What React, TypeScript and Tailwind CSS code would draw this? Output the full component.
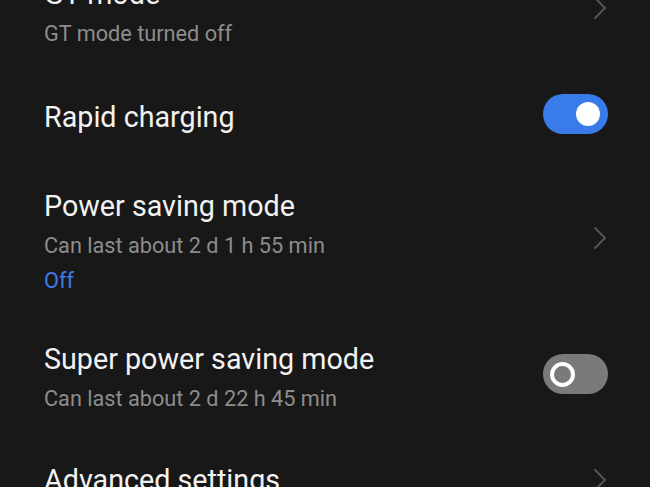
import type { FC } from 'react';

const Chevron: FC<{ className?: string }> = ({ className = '' }) => (
  <svg width="14" height="24" viewBox="0 0 14 24" className={className}>
    <path d="M2 2 L12 12 L2 22" fill="none" stroke="#545454" strokeWidth="2" strokeLinecap="round" strokeLinejoin="round" />
  </svg>
);

const Toggle: FC<{ on: boolean; className?: string }> = ({ on, className = '' }) =>
  on ? (
    <div className={`w-[65px] h-[40px] rounded-full bg-[#3a7bea] flex items-center justify-end pr-[8px] ${className}`}>
      <div className="w-[24px] h-[24px] rounded-full bg-white" />
    </div>
  ) : (
    <div className={`w-[65px] h-[40px] rounded-full bg-[#7a7a7a] flex items-center pl-[7px] ${className}`}>
      <div className="w-[25px] h-[25px] rounded-full border-[4px] border-white bg-[#7a7a7a]" />
    </div>
  );

const Title: FC<{ text: string }> = ({ text }) => (
  <div className="text-[28.7px] leading-[36px] text-[#f2f2f2]">{text}</div>
);

const Sub: FC<{ text: string; blue?: boolean; first?: boolean }> = ({ text, blue, first }) => (
  <div className={`text-[21.7px] leading-[35px] ${first ? 'mt-[4px]' : ''} ${blue ? 'text-[#3d7be6]' : 'text-[#8d8d8d]'}`}>
    {text}
  </div>
);

export default function App() {
  return (
    <div
      className="w-[650px] h-[487px] overflow-hidden bg-[#181818]"
      style={{ fontFamily: 'Roboto, "Noto Sans", sans-serif' }}
    >
      <div className="mt-[-24px] flex flex-col">
        {/* GT mode */}
        <div className="flex items-center pl-[44px] pr-[43px] pb-[21px]">
          <div className="flex-1">
            <Title text="GT mode" />
            <Sub text="GT mode turned off" first />
          </div>
          <Chevron className="mb-[12px]" />
        </div>

        {/* Rapid charging */}
        <div className="flex items-center pl-[44px] pr-[42px] pt-[22px] pb-[30px]">
          <div className="flex-1">
            <Title text="Rapid charging" />
          </div>
          <Toggle on className="mb-[5px]" />
        </div>

        {/* Power saving mode */}
        <div className="flex items-center pl-[44px] pr-[43px] pt-[19px] pb-[21px]">
          <div className="flex-1">
            <Title text="Power saving mode" />
            <Sub text="Can last about 2 d 1 h 55 min" first />
            <Sub text="Off" blue />
          </div>
          <Chevron className="mb-[10px]" />
        </div>

        {/* Super power saving mode */}
        <div className="flex items-center pl-[44px] pr-[42px] pt-[22px] pb-[21px]">
          <div className="flex-1">
            <Title text="Super power saving mode" />
            <Sub text="Can last about 2 d 22 h 45 min" first />
          </div>
          <Toggle on={false} className="mb-[9px]" />
        </div>

        {/* Advanced settings */}
        <div className="flex items-center pl-[44px] pr-[43px] pt-[25px] pb-[21px]">
          <div className="flex-1">
            <Title text="Advanced settings" />
          </div>
          <Chevron />
        </div>
      </div>
    </div>
  );
}
